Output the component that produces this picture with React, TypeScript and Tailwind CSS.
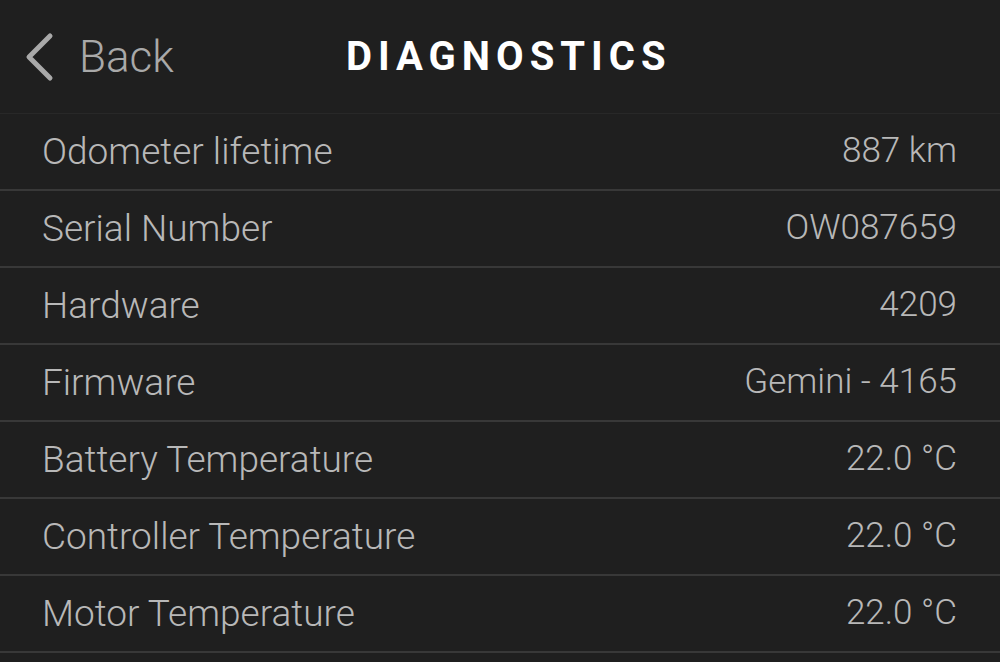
const rows = [
  { label: "Odometer lifetime", value: "887 km" },
  { label: "Serial Number", value: "OW087659" },
  { label: "Hardware", value: "4209" },
  { label: "Firmware", value: "Gemini - 4165" },
  { label: "Battery Temperature", value: "22.0 °C" },
  { label: "Controller Temperature", value: "22.0 °C" },
  { label: "Motor Temperature", value: "22.0 °C" },
];

export default function App() {
  return (
    <div
      className="w-[1000px] h-[662px] overflow-hidden bg-[#1f1f1f] text-[#b8b8b8]"
      style={{ fontFamily: "Roboto, 'Liberation Sans', sans-serif" }}
    >
      {/* HEADER */}
      <div className="h-[114px] flex items-center border-b border-[#282828]">
        <div className="w-[346px] flex items-center pl-[24px]">
          <svg width="30" height="50" viewBox="0 0 30 50" fill="none">
            <path
              d="M26 4 L5 25 L26 46"
              stroke="#a9a9a9"
              strokeWidth="5"
              strokeLinecap="round"
              strokeLinejoin="round"
            />
          </svg>
          <span className="ml-[25px] text-[44px] font-light text-[#a9a9a9]">Back</span>
        </div>
        <h1 className="text-[40px] font-bold tracking-[0.15em] text-white">DIAGNOSTICS</h1>
      </div>

      {/* ROWS */}
      {rows.map((r) => (
        <div
          key={r.label}
          className="h-[77px] flex items-center justify-between pl-[42px] pr-[43px] border-b-2 border-[#383838] font-light"
        >
          <span className="text-[37px]">{r.label}</span>
          <span className="text-[35px]">{r.value}</span>
        </div>
      ))}
    </div>
  );
}
